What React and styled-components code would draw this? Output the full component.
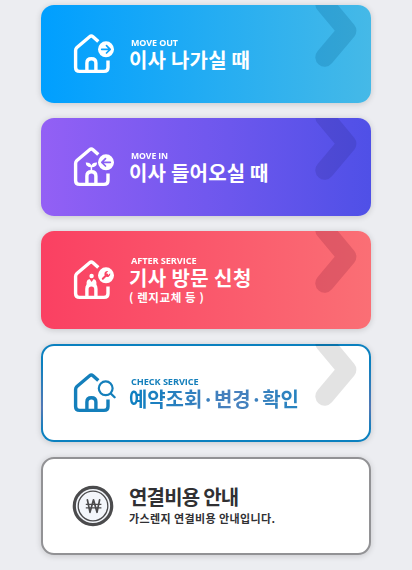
import styled, { createGlobalStyle } from "styled-components";

const GlobalStyle = createGlobalStyle`
  body {
    margin: 0;
    background: #ecedf1;
    font-family: "Noto Sans CJK KR", "Noto Sans", sans-serif;
  }
`;

const Menu = styled.main`
  display: flex;
  flex-direction: column;
  gap: 15px;
  box-sizing: border-box;
  height: 570px;
  padding: 5px 41px 0;
  overflow: hidden;
`;

const Card = styled.a`
  position: relative;
  display: flex;
  align-items: flex-start;
  box-sizing: border-box;
  flex: 0 0 98px;
  padding-left: 31px;
  border: 2px solid ${(p) => p.$line || "transparent"};
  border-radius: 13px;
  background: ${(p) => p.$bg};
  background-origin: border-box;
  color: ${(p) => p.$color || "#fff"};
  box-shadow: 0 1px 6px rgba(0, 0, 0, 0.16);
`;

const Icon = styled.svg`
  flex: none;
  width: 44px;
  height: 44px;
  margin: 25px 13px 0 -2px;
  fill: none;
  stroke: currentColor;
  stroke-width: 3.4;
  stroke-linecap: round;
  stroke-linejoin: round;
`;

const Chevron = styled.svg`
  position: absolute;
  top: -2px;
  right: 6px;
  width: 50px;
  height: 70px;
  fill: none;
  stroke: ${(p) => p.$tone};
  stroke-width: 18.8;
  stroke-linecap: round;
  stroke-linejoin: round;
`;

const Texts = styled.div`
  display: flex;
  flex-direction: column;
  align-items: flex-start;
  padding-top: ${(p) => p.$top || 30}px;
  white-space: nowrap;
`;

const Label = styled.span`
  margin-left: 2px;
  font: 700 9.5px/11px "Open Sans", sans-serif;
  letter-spacing: -0.1px;
  transform: scaleX(${(p) => p.$stretch || 0.97});
  transform-origin: left;
`;

const Title = styled.strong`
  font-size: 20px;
  font-weight: 700;
  line-height: 24px;
  letter-spacing: ${(p) => p.$spacing || "0.2px"};
`;

const GradientTitle = styled(Title)`
  background: linear-gradient(100deg, #0a7fc1, #4a80bd 60%, #2583c0);
  background-clip: text;
  color: transparent;
`;

const Note = styled.span`
  margin-top: ${(p) => p.$top || 0}px;
  font-size: ${(p) => p.$size || 12}px;
  font-weight: 700;
  line-height: 14px;
  letter-spacing: ${(p) => p.$spacing || "0"};
`;

const House = () => (
  <>
    <path d="M26.3 9.6L21 4.8Q19.3 3.4 17.6 4.8L4.9 15.5Q3.6 16.7 3.6 18.5V35.4Q3.6 39.4 7.6 39.4H32Q36 39.4 36 35.4V28.5" strokeLinecap="butt" />
    <path d="M14.9 39V31Q14.9 26.8 19.4 26.8Q23.9 26.8 23.9 31V39" strokeLinecap="butt" />
  </>
);

const Badge = () => <circle cx="34" cy="17.3" r="8" fill="currentColor" stroke="none" />;

const Arrow = ({ tone }) => (
  <Chevron viewBox="0 0 50 70" $tone={tone}>
    <path d="M11.7 -1L34 25.7L11.7 52.3" />
  </Chevron>
);

const App = () => {
  return (
    <>
      <GlobalStyle />
      <Menu>
        <Card $bg="linear-gradient(90deg, #009fff, #45b9e7)">
          <Icon viewBox="0 0 44 44">
            <House />
            <Badge />
            <path d="M29.7 17.3H37.8M34.5 13.6L38.2 17.3L34.5 21" stroke="#0ca3fd" strokeWidth="1.7" />
          </Icon>
          <Texts>
            <Label $stretch={0.94}>MOVE OUT</Label>
            <Title>이사 나가실 때</Title>
          </Texts>
          <Arrow tone="rgba(0, 85, 130, 0.2)" />
        </Card>

        <Card $bg="linear-gradient(90deg, #9360f5, #4f50e7)">
          <Icon viewBox="0 0 44 44">
            <House />
            <Badge />
            <path d="M38.3 17.3H30.2M33.5 13.6L29.8 17.3L33.5 21" stroke="#8960f3" strokeWidth="1.7" />
            <path d="M19.4 27V21.5" strokeWidth="1.5" />
            <path d="M19.4 22.3Q14 22.4 13.7 17.5Q18.4 17.2 19.4 20.6Q20.4 17.2 25.1 17.5Q24.8 22.4 19.4 22.3Z" fill="currentColor" stroke="none" />
          </Icon>
          <Texts>
            <Label $stretch={0.91}>MOVE IN</Label>
            <Title>이사 들어오실 때</Title>
          </Texts>
          <Arrow tone="rgba(40, 40, 130, 0.2)" />
        </Card>

        <Card $bg="linear-gradient(90deg, #fa4062, #fa6f75)">
          <Icon viewBox="0 0 44 44">
            <House />
            <Badge />
            <path d="M30.8 20.7L35 16.5" stroke="#fa4565" strokeWidth="2" />
            <path d="M38.2 15.2L36.2 17.1L34.2 15.3L36.2 13.2Q33.6 12.6 32.6 14.7Q31.9 16.4 33.2 17.9Q34.8 19.4 36.7 18.7Q38.7 17.7 38.2 15.2Z" fill="#fa4565" stroke="none" />
            <circle cx="19.6" cy="18" r="2.2" fill="currentColor" stroke="none" />
            <path d="M14.6 28V24Q15 21.4 17.5 21L19.6 24L21.7 21Q24 21.4 24.4 24V28Z" fill="currentColor" stroke="none" />
          </Icon>
          <Texts $top={22}>
            <Label>AFTER SERVICE</Label>
            <Title $spacing="0.4px">기사 방문 신청</Title>
            <Note $size={11.5} $spacing="0.6px">( 렌지교체 등 )</Note>
          </Texts>
          <Arrow tone="rgba(120, 20, 50, 0.2)" />
        </Card>

        <Card
          $bg="linear-gradient(#fff, #fff) padding-box, linear-gradient(180deg, #0b80bf 20%, #5278b5 65%, #0b80bf 90%) border-box"
          $color="#147fbb"
        >
          <Icon viewBox="0 0 44 44">
            <House />
            <circle cx="33.7" cy="17.3" r="6.9" strokeWidth="2.2" />
            <path d="M39 22.7L42.6 26.3" strokeWidth="2.3" />
          </Icon>
          <Texts>
            <Label>CHECK SERVICE</Label>
            <GradientTitle $spacing="-0.1px">예약조회·변경·확인</GradientTitle>
          </Texts>
          <Arrow tone="rgba(0, 0, 0, 0.11)" />
        </Card>

        <Card $bg="#fff" $line="#929295" $color="#303033">
          <Icon viewBox="0 0 44 44">
            <circle cx="21" cy="22" r="18.7" fill="#f3f6fb" stroke="#4b4b4d" strokeWidth="3.2" />
            <circle cx="21" cy="22" r="14.8" stroke="#4b4b4d" strokeWidth="1.3" />
            <path d="M15.4 15.8L18 28.3L21.5 15.8L25 28.3L27.6 15.8" stroke="#4b4b4d" strokeWidth="1.7" />
            <path d="M13.8 20.4H29.4M13.8 23.8H29.4" stroke="#4b4b4d" strokeWidth="1.2" strokeLinecap="butt" />
          </Icon>
          <Texts $top={26}>
            <Title $spacing="-0.8px">연결비용 안내</Title>
            <Note $size={11} $spacing="0.4px" $top={2}>가스렌지 연결비용 안내입니다.</Note>
          </Texts>
        </Card>
      </Menu>
    </>
  );
};

export default App;
